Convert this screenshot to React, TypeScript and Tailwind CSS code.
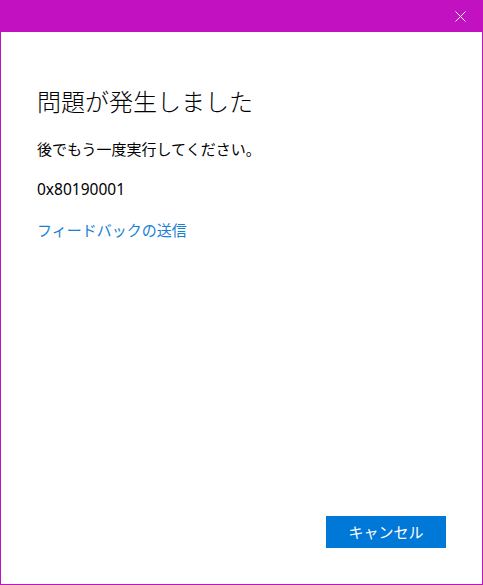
export default function App() {
  return (
    <div
      className="w-[483px] h-[585px] flex flex-col bg-white border-x border-b border-[#c211c1]"
      style={{ fontFamily: '"Noto Sans", "Noto Sans CJK JP", sans-serif' }}
    >
      {/* Title bar */}
      <div className="h-8 shrink-0 bg-[#c211c1] flex items-center justify-end -mx-px">
        <button className="w-[46px] h-8 flex items-center justify-center">
          <svg width="11" height="11" viewBox="0 0 11 11" className="text-white">
            <path d="M0.5 0.5 L10.5 10.5 M10.5 0.5 L0.5 10.5" stroke="currentColor" strokeWidth="1" fill="none" />
          </svg>
        </button>
      </div>

      {/* Content */}
      <div className="flex-1 flex flex-col px-9 pt-[54px]">
        <h1 className="text-[24px] leading-8 font-light text-black">問題が発生しました</h1>
        <p className="mt-[21px] text-[15px] leading-5 text-black">後でもう一度実行してください。</p>
        <p className="mt-[20px] text-[15.5px] leading-5 text-black">0x80190001</p>
        <a className="mt-[19px] text-[15px] leading-6 text-[#1a7fd6] self-start cursor-pointer">
          フィードバックの送信
        </a>
        <div className="flex-1" />
        <div className="flex justify-end pb-9">
          <button className="w-[120px] h-8 bg-[#0078d7] text-white text-[15px] leading-5">
            キャンセル
          </button>
        </div>
      </div>
    </div>
  );
}
